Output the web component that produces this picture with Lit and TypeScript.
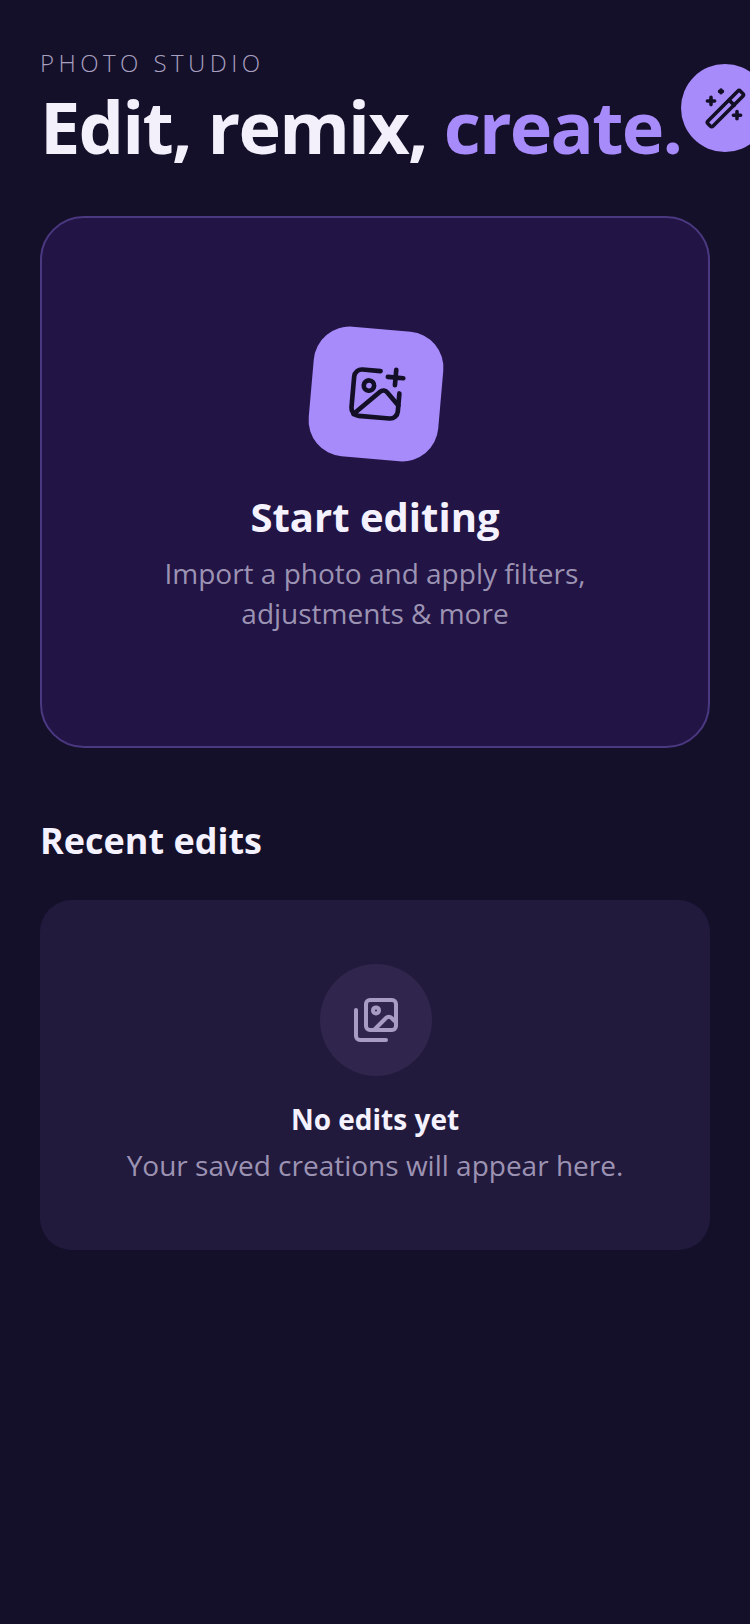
import { LitElement, css, html, svg } from 'lit';
import { customElement } from 'lit/decorators.js';

const wandIcon = svg`
  <rect x="0.700" y="10.500" width="23" height="3.600" rx="1" transform="rotate(-45 12.200 12.300)" />
  <path d="m14.070 8.070 2.540 2.540" />
  <path d="M5 6.700v3.600M3.200 8.500h3.600" />
  <path d="M18 13.800v3.600M16.200 15.600h3.600" />
  <path d="M10 3v1.400M9.300 3.700h1.400" />
`;

const addPhotoIcon = svg`
  <path d="M13 3H6a3 3 0 0 0-3 3v12a3 3 0 0 0 3 3h12a3 3 0 0 0 3-3v-7" />
  <circle cx="9" cy="9" r="2" />
  <path d="m4 20.500 9.500-9.500a2 2 0 0 1 2.800 0l4.700 4.700" />
  <path d="M19 2v6M16 5h6" />
`;

const galleryIcon = svg`
  <rect x="7" y="2" width="15" height="15" rx="2" />
  <circle cx="12" cy="7.200" r="1.500" />
  <path d="m11 17 6-6a2 2 0 0 1 2.800 0l2.200 2.200" />
  <path d="M2 7v13a2 2 0 0 0 2 2h13" />
`;

@customElement('app-root')
export class AppRoot extends LitElement {
  static styles = css`
    :host {
      display: block;
      width: 750px;
      height: 1624px;
      overflow: hidden;
      background: #15102a;
      font-family: 'Open Sans', 'Noto Sans', sans-serif;
      color: #f3f0fc;
    }

    .page {
      display: flex;
      flex-direction: column;
      padding: 47px 40px 0;
    }

    .header {
      display: flex;
      align-items: center;
      width: 670px;
    }

    .heading {
      flex-shrink: 0;
    }

    .eyebrow {
      font-size: 24px;
      line-height: 32px;
      font-weight: 300;
      letter-spacing: 4.45px;
      color: #a9a0c0;
    }

    .title {
      margin: 3px 0 0;
      font-size: 72px;
      line-height: 88px;
      font-weight: 700;
      letter-spacing: -1.8px;
      white-space: nowrap;
    }

    .accent {
      color: #a78bfa;
    }

    .fab {
      flex-shrink: 0;
      width: 88px;
      height: 88px;
      margin-top: -2px;
      border: 0;
      padding: 0;
      border-radius: 50%;
      background: #a78bfa;
      display: flex;
      align-items: center;
      justify-content: center;
    }

    .fab svg {
      width: 48px;
      height: 48px;
      stroke: #130f26;
      stroke-width: 1.800;
    }

    svg {
      fill: none;
      stroke-width: 2;
      stroke-linecap: round;
      stroke-linejoin: round;
    }

    .start {
      box-sizing: border-box;
      height: 532px;
      margin-top: 46px;
      padding-top: 111px;
      border: 2px solid #4a3880;
      border-radius: 44px;
      background: #221445;
      display: flex;
      flex-direction: column;
      align-items: center;
      text-align: center;
    }

    .tile {
      width: 130px;
      height: 130px;
      margin-left: 2px;
      border-radius: 36px;
      background: #a78bfa;
      transform: rotate(5deg);
      display: flex;
      align-items: center;
      justify-content: center;
    }

    .tile svg {
      width: 62px;
      height: 62px;
      stroke: #130f26;
      stroke-width: 1.800;
    }

    .start-title {
      margin: 31px 0 0;
      font-size: 40px;
      line-height: 54px;
      font-weight: 700;
      color: #f5f2ff;
    }

    .start-text {
      margin: 9px 0 0;
      font-size: 28px;
      line-height: 40px;
      color: #9c93b3;
    }

    .section-title {
      margin: 69px 0 0;
      font-size: 36px;
      line-height: 48px;
      font-weight: 700;
      color: #f5f2ff;
    }

    .empty {
      box-sizing: border-box;
      height: 350px;
      margin-top: 35px;
      border-radius: 32px;
      background: #221a3d;
      padding-top: 64px;
      display: flex;
      flex-direction: column;
      align-items: center;
      text-align: center;
    }

    .empty-badge {
      width: 112px;
      height: 112px;
      margin-left: 2px;
      border-radius: 50%;
      background: #30264d;
      display: flex;
      align-items: center;
      justify-content: center;
    }

    .empty-badge svg {
      width: 48px;
      height: 48px;
      stroke: #a89cc4;
    }

    .empty-title {
      margin: 24px 0 0;
      font-size: 28px;
      line-height: 38px;
      font-weight: 700;
      color: #f5f2ff;
    }

    .empty-text {
      margin: 8px 0 0;
      font-size: 28px;
      line-height: 38px;
      color: #9c93b3;
    }
  `;

  render() {
    return html`
      <main class="page">
        <header class="header">
          <div class="heading">
            <div class="eyebrow">PHOTO STUDIO</div>
            <h1 class="title">Edit, remix, <span class="accent">create.</span></h1>
          </div>
          <button class="fab" aria-label="Magic edit">
            <svg viewBox="0 0 24 24">${wandIcon}</svg>
          </button>
        </header>

        <section class="start">
          <div class="tile"><svg viewBox="0 0 24 24">${addPhotoIcon}</svg></div>
          <h2 class="start-title">Start editing</h2>
          <p class="start-text">Import a photo and apply filters,<br />adjustments &amp; more</p>
        </section>

        <h2 class="section-title">Recent edits</h2>
        <section class="empty">
          <div class="empty-badge"><svg viewBox="0 0 24 24">${galleryIcon}</svg></div>
          <div class="empty-title">No edits yet</div>
          <div class="empty-text">Your saved creations will appear here.</div>
        </section>
      </main>
    `;
  }
}
